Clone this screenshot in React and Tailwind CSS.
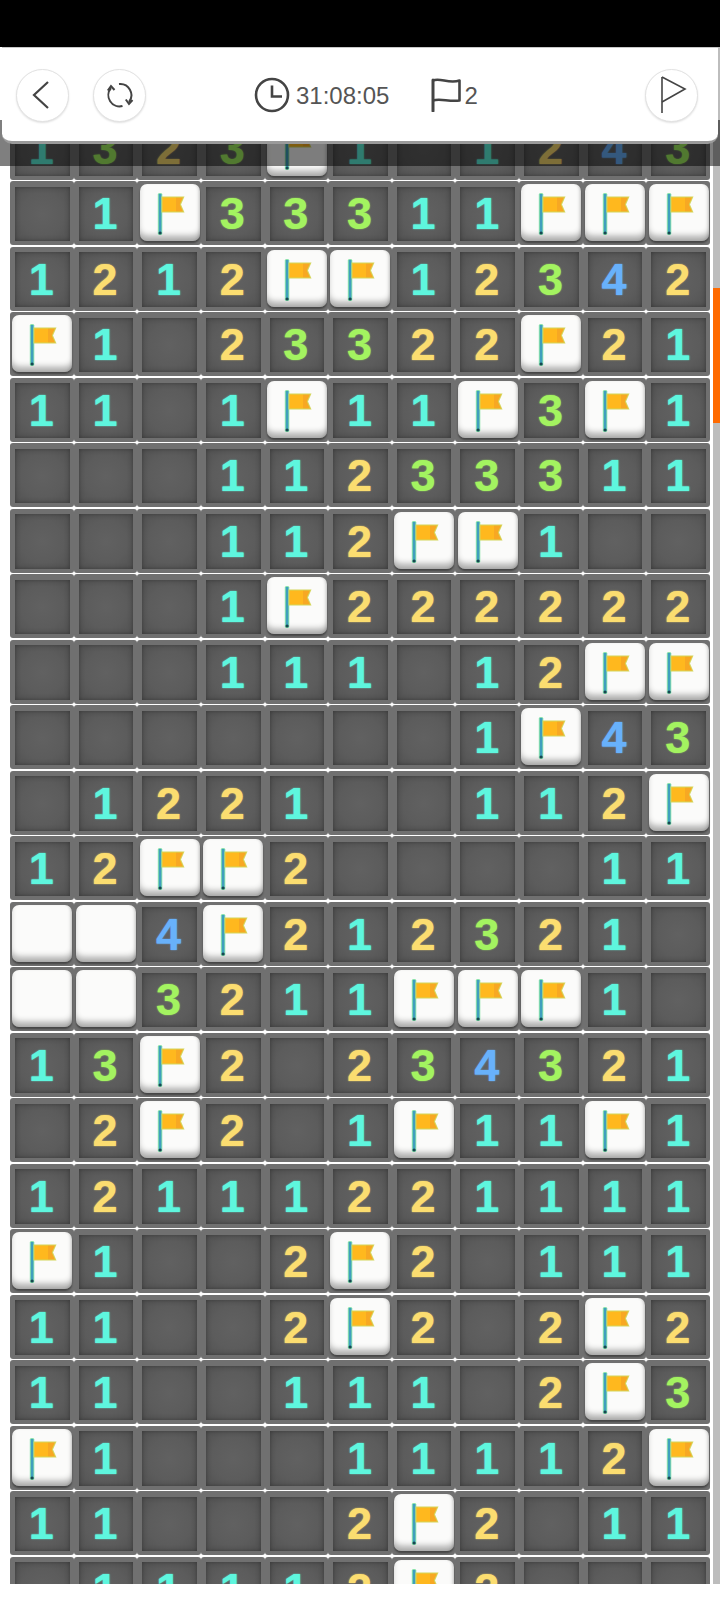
const rows = [
  "1323F1_1243",
  "_1F33311FFF",
  "1212FF12342",
  "F1_23322F21",
  "11_1F11F3F1",
  "___11233311",
  "___112FF1__",
  "___1F222222",
  "___111_12FF",
  "_______1F43",
  "_1221__112F",
  "12FF2____11",
  "WW4F212321_",
  "WW3211FFF1_",
  "13F2_234321",
  "_2F2_1F11F1",
  "12111221111",
  "F1__2F2_111",
  "11__2F2_2F2",
  "11__111_2F3",
  "F1___11112F",
  "11___2F2_11",
  "_11112F2___",
];

const digitColor = {
  1: "text-[#5ef6de]",
  2: "text-[#fbdd70]",
  3: "text-[#a3f360]",
  4: "text-[#68b1fb]",
};

function Flag() {
  return (
    <svg viewBox="0 0 60 57" className="h-full w-full blur-[0.4px]">
      <rect x="17.8" y="9" width="4.5" height="42" rx="1.5" fill="#8ce3ac" />
      <rect x="18.8" y="10" width="2.6" height="40" fill="#3f9fbd" />
      <rect x="18.5" y="47.5" width="3.2" height="3" rx="1.5" fill="#17484f" />
      <path d="M21.5 12.5 H44.5 L41 20.5 L44.5 28.5 H21.5 Z" fill="#d4d65a" />
      <path d="M22.5 13.5 H36 V27.5 H22.5 Z" fill="#ffb81e" />
      <path d="M36 13.5 H43 L39.8 20.5 L43 27.5 H36 Z" fill="#f7a823" />
    </svg>
  );
}

function Tile({ flag }) {
  return (
    <div className="ml-[2.3px] mt-[3px] h-[57px] w-[60px] shrink-0 rounded-[7px] bg-[#fbfbfa] shadow-[inset_0_-7px_6px_-2px_rgba(0,0,0,0.32),inset_-2px_0_3px_-1px_rgba(0,0,0,0.15),0_2px_2px_rgba(0,0,0,0.4)]">
      {flag && <Flag />}
    </div>
  );
}

function Cell({ c }) {
  if (c === "F" || c === "W") {
    return (
      <div className="h-[64px] rounded-[3px] bg-[#707070]">
        <Tile flag={c === "F"} />
      </div>
    );
  }
  return (
    <div className="h-[64px] rounded-[3px] bg-[#707070] pb-[4px] pl-[5px] pr-[4px] pt-[5.5px]">
      <div className="flex h-full w-full items-center justify-center bg-[radial-gradient(circle,#616161_0%,#5c5c5c_55%,#525252_100%)] shadow-[inset_0_0_5px_rgba(0,0,0,0.35)]">
        {c !== "_" && (
          <span className={`-ml-[2px] text-[45px] font-bold leading-none [text-shadow:0_0_1.5px_currentColor] ${digitColor[c]}`}>{c}</span>
        )}
      </div>
    </div>
  );
}

function CircleButton({ children, className = "" }) {
  return (
    <div className={`flex h-[53px] w-[53px] items-center justify-center rounded-full border border-[#e2e2e2] bg-white shadow-[0_1px_2px_rgba(0,0,0,0.12)] ${className}`}>
      {children}
    </div>
  );
}

export default function App() {
  return (
    <div className="relative h-[1600px] w-[720px] overflow-hidden bg-white font-['Liberation_Sans',sans-serif]">
      <div className="h-[47px] bg-black" />

      <div className="h-[1537px] overflow-hidden pl-[10px] pt-[68.5px]">
        <div className="grid w-[700px] grid-cols-[repeat(11,minmax(0,1fr))] gap-y-[1.5px]">
          {rows.flatMap((r, i) => r.split("").map((c, j) => <Cell key={`${i}-${j}`} c={c} />))}
        </div>
      </div>

      {/* scrollbar */}
      <div className="absolute bottom-[16px] right-0 top-[47px] w-[7px] bg-[#bdbdbd]">
        <div className="absolute left-0 right-0 top-[241px] h-[135px] bg-[#ff6a00]" />
      </div>

      {/* dim band below header */}
      <div className="absolute left-0 right-0 top-[120px] h-[46px] bg-black/50" />

      {/* header */}
      <div className="absolute left-[2px] right-[2px] top-[47px] h-[97px] rounded-b-[10px] border-b-[3px] border-t border-b-[#9a9a9a] border-t-[#c8c8c8] bg-white">
        <div className="flex h-full items-center pl-[14px] pr-[20px] pt-[1px]">
          <CircleButton>
            <svg width="20" height="30" viewBox="0 0 20 30" className="-ml-[4px]" fill="none" stroke="#444" strokeWidth="2.2">
              <path d="M17 2 L3 15 L17 28" />
            </svg>
          </CircleButton>
          <CircleButton className="ml-[24px]">
            <svg width="28" height="28" viewBox="0 0 28 28" className="-mt-[1px]" fill="none" stroke="#444" strokeWidth="2">
              <path d="M13 3 A11.2 11.2 0 0 1 23 21" />
              <path d="M16.5 25 A11.2 11.2 0 0 1 5 7" />
              <path d="M19.8 18.5 L23 23 L26.5 19" />
              <path d="M1.8 9.5 L5 5 L8.5 9" />
            </svg>
          </CircleButton>
          <svg width="36" height="36" viewBox="0 0 36 36" className="ml-[108px]" fill="none" stroke="#444" strokeWidth="2.6">
            <circle cx="18" cy="18" r="16" />
            <path d="M18 8.5 V19.5 H28" />
          </svg>
          <span className="ml-[6px] mt-[2px] text-[24px] text-[#555]">31:08:05</span>
          <svg width="32" height="34" viewBox="0 0 32 34" className="ml-[41px]" fill="none" stroke="#444" strokeWidth="2.6" strokeLinejoin="round">
            <path d="M3 33 V2" strokeLinecap="round" strokeWidth="3" />
            <path d="M3 2.5 C 10 -0.5 19 6 29.5 2.5 V 22.5 C 19 24 10 20 3 22.5" />
          </svg>
          <span className="ml-[2px] mt-[2px] text-[24px] text-[#555]">2</span>
          <CircleButton className="ml-auto">
            <svg width="28" height="38" viewBox="0 0 28 38" fill="none" stroke="#444" strokeWidth="1.6" className="ml-[2px]">
              <path d="M3 1 V37" />
              <path d="M3 1 L26 13 L3 26" />
            </svg>
          </CircleButton>
        </div>
      </div>
    </div>
  );
}
